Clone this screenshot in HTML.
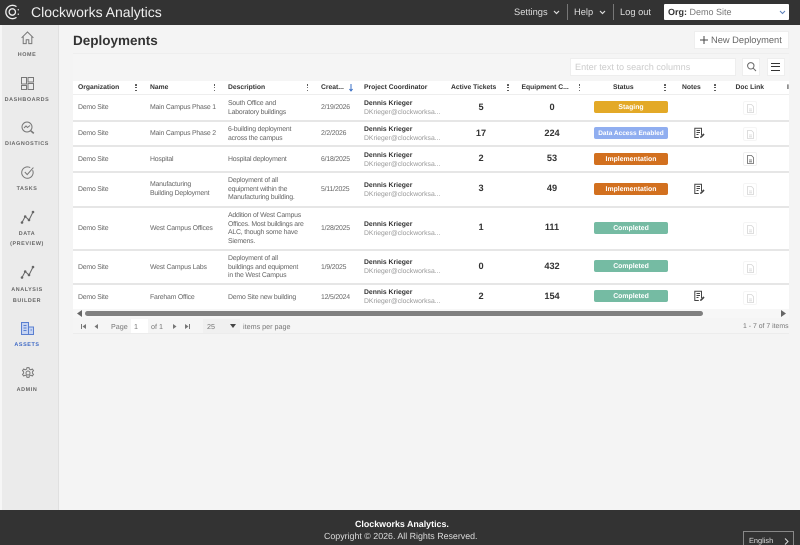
<!DOCTYPE html>
<html lang="en"><head><meta charset="utf-8"><title>Deployments</title>
<style>
html,body{margin:0;padding:0;width:800px;height:545px;overflow:hidden;background:#f4f4f4}
body{font-family:"Liberation Sans",sans-serif;color:#444;position:relative;text-rendering:geometricPrecision;filter:blur(.3px)}
.a{position:absolute}
.t{position:absolute;white-space:nowrap}
.h{position:absolute;top:84px;font-size:6.75px;font-weight:bold;color:#333;line-height:8px;white-space:nowrap}
.c{position:absolute;font-size:6.9px;color:#666;line-height:8.6px;white-space:nowrap;letter-spacing:-.2px;margin-top:1px}
.n{position:absolute;font-size:9.2px;font-weight:bold;color:#333;width:60px;text-align:center;line-height:10px}
.dk{position:absolute;left:364px;font-size:6.8px;font-weight:bold;color:#333;line-height:8px;white-space:nowrap;margin-top:1px}
.em{position:absolute;left:364px;font-size:6.8px;color:#999;line-height:8px;white-space:nowrap;margin-top:1px}
.b{position:absolute;left:594px;width:74px;height:12px;border-radius:2px;color:#fff;font-size:6.9px;font-weight:bold;text-align:center;line-height:13.5px;white-space:nowrap}
.r{position:absolute;left:73px;width:716px;height:2px;background:#e6e6e6}
.d{position:absolute;width:2px}
.d i{display:block;width:1.6px;height:1.6px;background:#444;border-radius:50%;margin-bottom:1.2px}
.s{position:absolute;left:0;width:54px;text-align:center;font-size:5.4px;font-weight:bold;letter-spacing:.6px;color:#666;line-height:11px;white-space:nowrap;margin-top:1px}
.doc{position:absolute;left:743px;width:12px;height:12px;background:#fff;border:1px solid #f0f0f0;border-radius:2px;margin-top:1px}
.doc svg{position:absolute;left:2.500px;top:1.500px}
svg{position:absolute;overflow:visible}
.p{position:absolute;font-size:7.2px;color:#777;line-height:9px;white-space:nowrap;top:322px}
</style></head><body>

<!-- top bar -->
<div class="a" style="left:0;top:0;width:800px;height:25px;background:#333"></div>
<svg style="left:5px;top:4px" width="15" height="16" viewBox="0 0 15 16" fill="none" stroke="#eee" stroke-width="1.3"><path d="M11.500 2.600A6.700 6.700 0 1 0 11.500 13.400"/><circle cx="7.300" cy="8" r="3.200"/><circle cx="13.300" cy="5.800" r=".7" fill="#eee" stroke="none"/><circle cx="13.300" cy="10.200" r=".7" fill="#eee" stroke="none"/></svg>
<div class="t" style="left:31px;top:3px;font-size:14px;color:#eee;line-height:18px">Clockworks Analytics</div>
<div class="t" style="left:514px;top:6px;font-size:9.3px;color:#ddd;line-height:12px">Settings</div>
<svg style="left:553px;top:10px" width="7" height="5" fill="none" stroke="#ddd" stroke-width="1.2"><path d="M1 1l2.500 2.500L6 1"/></svg>
<div class="a" style="left:567px;top:4px;width:1px;height:16px;background:#777"></div>
<div class="t" style="left:574px;top:6px;font-size:9.3px;color:#ddd;line-height:12px">Help</div>
<svg style="left:599px;top:10px" width="7" height="5" fill="none" stroke="#ddd" stroke-width="1.2"><path d="M1 1l2.500 2.500L6 1"/></svg>
<div class="a" style="left:613px;top:4px;width:1px;height:16px;background:#777"></div>
<div class="t" style="left:620px;top:6px;font-size:9.3px;color:#ddd;line-height:12px">Log out</div>
<div class="a" style="left:664px;top:4px;width:125px;height:16px;background:#fff;border-radius:1px"></div>
<div class="t" style="left:668px;top:6px;font-size:9px;color:#777;line-height:12px"><b style="color:#333">Org:</b> Demo Site</div>
<svg style="left:779px;top:10px" width="7" height="5" fill="none" stroke="#5b7fb8" stroke-width="1"><path d="M1 1l2.500 2.500L6 1"/></svg>

<!-- sidebar -->
<div class="a" style="left:0;top:25px;width:58px;height:485px;background:#ebebeb;border-right:1px solid #e0e0e0"></div>
<div class="a" style="left:0;top:25px;width:2px;height:485px;background:#f6f6f6"></div>
<svg style="left:21px;top:31px" width="13" height="14" fill="none" stroke="#777" stroke-width="1"><path d="M.6 6.800L6.500 1l5.900 5.800M2.200 5.600v7h3V8.800h2.600v3.800h3v-7"/></svg>
<div class="s" style="top:49px">HOME</div>
<svg style="left:21px;top:77px" width="13" height="13" fill="none" stroke="#777" stroke-width="1"><rect x=".5" y=".5" width="5" height="6.500"/><rect x="7" y=".5" width="5.500" height="4.500"/><rect x=".5" y="8.500" width="5" height="4"/><rect x="7" y="6.500" width="5.500" height="6"/></svg>
<div class="s" style="top:94px">DASHBOARDS</div>
<svg style="left:21px;top:121px" width="14" height="14" fill="none" stroke="#777" stroke-width="1"><circle cx="6" cy="6" r="5"/><path d="M9.800 9.800l3 2.600" stroke-width="1.600"/><path d="M3 7l2-2 1.500 1.500L9 4.500"/></svg>
<div class="s" style="top:138px">DIAGNOSTICS</div>
<svg style="left:21px;top:166px" width="13" height="13" fill="none" stroke="#777" stroke-width="1"><path d="M11.600 4.200A5.700 5.700 0 1 1 9.200 1.600"/><path d="M3.800 6l2.400 2.600L12.400 1.600"/></svg>
<div class="s" style="top:183px">TASKS</div>
<svg style="left:21px;top:211px" width="13" height="13" fill="none" stroke="#666" stroke-width="1"><path d="M1 11.500L4.200 5.500 8 9 12 1"/><circle cx="1" cy="11.500" r=".8" fill="#666"/><circle cx="4.200" cy="5.500" r=".8" fill="#666"/><circle cx="8" cy="9" r=".8" fill="#666"/><circle cx="12" cy="1" r=".8" fill="#666"/></svg>
<div class="s" style="top:228px">DATA</div>
<div class="s" style="top:238px">(PREVIEW)</div>
<svg style="left:21px;top:266px" width="13" height="13" fill="none" stroke="#666" stroke-width="1"><path d="M1 11.500L4.200 5.500 8 9 12 1"/><circle cx="1" cy="11.500" r=".8" fill="#666"/><circle cx="4.200" cy="5.500" r=".8" fill="#666"/><circle cx="8" cy="9" r=".8" fill="#666"/><circle cx="12" cy="1" r=".8" fill="#666"/></svg>
<div class="s" style="top:284px">ANALYSIS</div>
<div class="s" style="top:295px">BUILDER</div>
<svg style="left:21px;top:322px" width="13" height="13" fill="#c6d4f2" stroke="#5a7fd0" stroke-width="1"><rect x=".5" y=".5" width="7" height="12"/><rect x="7.500" y="5" width="5" height="7.500"/><path d="M2.500 3.500h3M2.500 6h3M2.500 8.500h3M9.500 8H11" fill="none"/></svg>
<div class="s" style="top:339px;color:#3a66c4">ASSETS</div>
<svg style="left:22px;top:367px" width="12" height="12" fill="none" stroke="#777" stroke-width="1"><circle cx="6" cy="6" r="2"/><path d="M5 .6h2l.4 1.600 1.400.6 1.500-.8 1.200 1.600-1.100 1.200v1.400l1.100 1.200-1.200 1.600-1.500-.8-1.400.6-.4 1.600H5l-.4-1.600-1.400-.6-1.500.8L.5 7.400l1.100-1.200V4.800L.5 3.600l1.200-1.600 1.500.8 1.400-.6z"/></svg>
<div class="s" style="top:384px">ADMIN</div>

<!-- heading -->
<div class="t" style="left:73px;top:32px;font-size:13.5px;font-weight:bold;color:#333;line-height:17px">Deployments</div>
<div class="a" style="left:694px;top:31px;width:95px;height:18px;background:#fff;border:1px solid #eee;box-sizing:border-box"></div>
<svg style="left:700px;top:36px" width="8" height="8" stroke="#444" stroke-width="1"><path d="M4 0v8M0 4h8"/></svg>
<div class="t" style="left:711px;top:34px;font-size:9.3px;color:#666;line-height:12px">New Deployment</div>

<!-- toolbar -->
<div class="a" style="left:73px;top:53px;width:716px;height:28px;background:#f5f5f5;border-top:1px solid #eee;box-sizing:border-box"></div>
<div class="a" style="left:570px;top:58px;width:166px;height:18px;background:#fff;border:1px solid #eee;box-sizing:border-box"></div>
<div class="t" style="left:575px;top:62px;font-size:9.1px;color:#ccc;line-height:10px">Enter text to search columns</div>
<div class="a" style="left:742px;top:58px;width:18px;height:18px;background:#fff;border:1px solid #eee;box-sizing:border-box"></div>
<svg style="left:747px;top:62px" width="9" height="9" fill="none" stroke="#666" stroke-width="1"><circle cx="3.800" cy="3.800" r="3.200"/><path d="M6.200 6.200L9 9"/></svg>
<div class="a" style="left:767px;top:58px;width:18px;height:18px;background:#fff;border:1px solid #eee;box-sizing:border-box"></div>
<div class="a" style="left:771px;top:63px;width:9px;height:8px;border-top:1px solid #333;border-bottom:1px solid #333;box-sizing:border-box"></div>
<div class="a" style="left:771px;top:66px;width:9px;height:1.200px;background:#333"></div>

<!-- table -->
<div class="a" style="left:73px;top:81px;width:716px;height:253px;background:#fff"></div>
<div class="a" style="left:73px;top:94px;width:716px;height:1px;background:#eee"></div>

<div class="h" style="left:78px">Organization</div>
<div class="h" style="left:150px">Name</div>
<div class="h" style="left:228px">Description</div>
<div class="h" style="left:321px">Creat...</div>
<div class="h" style="left:364px">Project Coordinator</div>
<div class="h" style="left:451px">Active Tickets</div>
<div class="h" style="left:521.500px">Equipment C...</div>
<div class="h" style="left:613px">Status</div>
<div class="h" style="left:682px">Notes</div>
<div class="h" style="left:735.500px">Doc Link</div>
<div class="h" style="left:787px">I</div>
<svg style="left:349px;top:84px" width="4" height="8" stroke="#3a6fc4" stroke-width="1" fill="none"><path d="M2 0v7M.4 5L2 7l1.600-2"/></svg>

<div class="d" style="left:135px;top:84px"><i></i><i></i><i></i></div>
<div class="d" style="left:213.500px;top:84px"><i></i><i></i><i></i></div>
<div class="d" style="left:306.500px;top:84px"><i></i><i></i><i></i></div>
<div class="d" style="left:507px;top:84px"><i></i><i></i><i></i></div>
<div class="d" style="left:578.500px;top:84px"><i></i><i></i><i></i></div>
<div class="d" style="left:664px;top:84px"><i></i><i></i><i></i></div>
<div class="d" style="left:714px;top:84px"><i></i><i></i><i></i></div>

<div class="r" style="top:120px"></div>
<div class="r" style="top:145px"></div>
<div class="r" style="top:171px"></div>
<div class="r" style="top:206px"></div>
<div class="r" style="top:249px"></div>
<div class="r" style="top:283px"></div>

<!-- row 1 -->
<div class="c" style="left:78px;top:103px">Demo Site</div>
<div class="c" style="left:150px;top:103px">Main Campus Phase 1</div>
<div class="c" style="left:228px;top:99px">South Office and<br>Laboratory buildings</div>
<div class="c" style="left:321px;top:103px">2/19/2026</div>
<div class="dk" style="top:99px">Dennis Krieger</div><div class="em" style="top:108px">DKrieger@clockworksa...</div>
<div class="n" style="left:451px;top:102px">5</div><div class="n" style="left:522px;top:102px">0</div>
<div class="b" style="top:101px;background:#e3a927">Staging</div>
<div class="doc" style="top:100px;opacity:.6"><svg width="7" height="9" fill="none" stroke="#bbb" stroke-width=".8"><path d="M.5.5h4l2 2v6h-6z"/><path d="M2 5h3M2 6.800h3"/></svg></div>

<!-- row 2 -->
<div class="c" style="left:78px;top:129px">Demo Site</div>
<div class="c" style="left:150px;top:129px">Main Campus Phase 2</div>
<div class="c" style="left:228px;top:125px">6-building deployment<br>across the campus</div>
<div class="c" style="left:321px;top:129px">2/2/2026</div>
<div class="dk" style="top:125px">Dennis Krieger</div><div class="em" style="top:134px">DKrieger@clockworksa...</div>
<div class="n" style="left:451px;top:128px">17</div><div class="n" style="left:522px;top:128px">224</div>
<div class="b" style="top:127px;background:#90aef0;font-size:6.5px">Data Access Enabled</div>
<svg style="left:694px;top:127px" width="11" height="12" fill="none" stroke="#444" stroke-width="1"><path d="M7.500 8V1.200H.8v9.300h4"/><path d="M2.500 3.500H6M2.500 5.500H6M2.500 7.500h2"/><path d="M6 11l.4-1.600 3-3 1.200 1.200-3 3z" fill="#444" stroke="none"/></svg>
<div class="doc" style="top:126px;opacity:.6"><svg width="7" height="9" fill="none" stroke="#bbb" stroke-width=".8"><path d="M.5.5h4l2 2v6h-6z"/><path d="M2 5h3M2 6.800h3"/></svg></div>

<!-- row 3 -->
<div class="c" style="left:78px;top:155px">Demo Site</div>
<div class="c" style="left:150px;top:155px">Hospital</div>
<div class="c" style="left:228px;top:155px">Hospital deployment</div>
<div class="c" style="left:321px;top:155px">6/18/2025</div>
<div class="dk" style="top:151px">Dennis Krieger</div><div class="em" style="top:160px">DKrieger@clockworksa...</div>
<div class="n" style="left:451px;top:153px">2</div><div class="n" style="left:522px;top:153px">53</div>
<div class="b" style="top:153px;background:#d2701f">Implementation</div>
<div class="doc" style="top:151px"><svg width="7" height="9" fill="none" stroke="#666" stroke-width=".8"><path d="M.5.5h4l2 2v6h-6z"/><path d="M2 5h3M2 6.800h3"/></svg></div>

<!-- row 4 -->
<div class="c" style="left:78px;top:185px">Demo Site</div>
<div class="c" style="left:150px;top:180px">Manufacturing<br>Building Deployment</div>
<div class="c" style="left:228px;top:176px">Deployment of all<br>equipment within the<br>Manufacturing building.</div>
<div class="c" style="left:321px;top:185px">5/11/2025</div>
<div class="dk" style="top:181px">Dennis Krieger</div><div class="em" style="top:190px">DKrieger@clockworksa...</div>
<div class="n" style="left:451px;top:183px">3</div><div class="n" style="left:522px;top:183px">49</div>
<div class="b" style="top:183px;background:#d2701f">Implementation</div>
<svg style="left:694px;top:183px" width="11" height="12" fill="none" stroke="#444" stroke-width="1"><path d="M7.500 8V1.200H.8v9.300h4"/><path d="M2.500 3.500H6M2.500 5.500H6M2.500 7.500h2"/><path d="M6 11l.4-1.600 3-3 1.200 1.200-3 3z" fill="#444" stroke="none"/></svg>
<div class="doc" style="top:182px;opacity:.6"><svg width="7" height="9" fill="none" stroke="#bbb" stroke-width=".8"><path d="M.5.5h4l2 2v6h-6z"/><path d="M2 5h3M2 6.800h3"/></svg></div>

<!-- row 5 -->
<div class="c" style="left:78px;top:224px">Demo Site</div>
<div class="c" style="left:150px;top:224px">West Campus Offices</div>
<div class="c" style="left:228px;top:211px">Addition of West Campus<br>Offices. Most buildings are<br>ALC, though some have<br>Siemens.</div>
<div class="c" style="left:321px;top:224px">1/28/2025</div>
<div class="dk" style="top:220px">Dennis Krieger</div><div class="em" style="top:229px">DKrieger@clockworksa...</div>
<div class="n" style="left:451px;top:222px">1</div><div class="n" style="left:522px;top:222px">111</div>
<div class="b" style="top:222px;background:#75bba3">Completed</div>
<div class="doc" style="top:221px;opacity:.6"><svg width="7" height="9" fill="none" stroke="#bbb" stroke-width=".8"><path d="M.5.5h4l2 2v6h-6z"/><path d="M2 5h3M2 6.800h3"/></svg></div>

<!-- row 6 -->
<div class="c" style="left:78px;top:263px">Demo Site</div>
<div class="c" style="left:150px;top:263px">West Campus Labs</div>
<div class="c" style="left:228px;top:254px">Deployment of all<br>buildings and equipment<br>in the West Campus</div>
<div class="c" style="left:321px;top:263px">1/9/2025</div>
<div class="dk" style="top:258px">Dennis Krieger</div><div class="em" style="top:267px">DKrieger@clockworksa...</div>
<div class="n" style="left:451px;top:261px">0</div><div class="n" style="left:522px;top:261px">432</div>
<div class="b" style="top:260px;background:#75bba3">Completed</div>
<div class="doc" style="top:260px;opacity:.6"><svg width="7" height="9" fill="none" stroke="#bbb" stroke-width=".8"><path d="M.5.5h4l2 2v6h-6z"/><path d="M2 5h3M2 6.800h3"/></svg></div>

<!-- row 7 -->
<div class="c" style="left:78px;top:293px">Demo Site</div>
<div class="c" style="left:150px;top:293px">Fareham Office</div>
<div class="c" style="left:228px;top:293px">Demo Site new building</div>
<div class="c" style="left:321px;top:293px">12/5/2024</div>
<div class="dk" style="top:288px">Dennis Krieger</div><div class="em" style="top:297px">DKrieger@clockworksa...</div>
<div class="n" style="left:451px;top:291px">2</div><div class="n" style="left:522px;top:291px">154</div>
<div class="b" style="top:290px;background:#75bba3">Completed</div>
<svg style="left:694px;top:290px" width="11" height="12" fill="none" stroke="#444" stroke-width="1"><path d="M7.500 8V1.200H.8v9.300h4"/><path d="M2.500 3.500H6M2.500 5.500H6M2.500 7.500h2"/><path d="M6 11l.4-1.600 3-3 1.200 1.200-3 3z" fill="#444" stroke="none"/></svg>
<div class="doc" style="top:290px;opacity:.6"><svg width="7" height="9" fill="none" stroke="#bbb" stroke-width=".8"><path d="M.5.5h4l2 2v6h-6z"/><path d="M2 5h3M2 6.800h3"/></svg></div>

<!-- scrollbar -->
<div class="a" style="left:73px;top:309px;width:716px;height:9px;background:#f7f7f7"></div>
<div class="a" style="left:85px;top:311px;width:618px;height:5px;background:#808080;border-radius:3px"></div>
<svg style="left:77px;top:310px" width="5" height="7" fill="#666"><path d="M5 0v7L0 3.500z"/></svg>
<svg style="left:781px;top:310px" width="5" height="7" fill="#666"><path d="M0 0v7l5-3.500z"/></svg>

<!-- pager -->
<div class="a" style="left:73px;top:318px;width:716px;height:16px;background:#f5f5f5;border-bottom:1px solid #ececec;box-sizing:border-box"></div>
<svg style="left:81px;top:324px" width="46" height="5" fill="#777"><path d="M0 0h1v5H0zM5 0v5L1.500 2.500zM17 0v5L13.500 2.500z"/></svg>
<div class="p" style="left:111px">Page</div>
<div class="a" style="left:131px;top:319px;width:17px;height:14px;background:#fff"></div>
<div class="p" style="left:134px">1</div>
<div class="p" style="left:151px">of 1</div>
<svg style="left:173px;top:324px" width="20" height="5" fill="#777"><path d="M0 0v5l3.500-2.500zM12 0v5l3.500-2.500zM16 0h1v5h-1z"/></svg>
<div class="a" style="left:203px;top:319px;width:37px;height:14px;background:#f0f0f0"></div>
<div class="p" style="left:207px">25</div>
<svg style="left:230px;top:324px" width="6" height="4" fill="#444"><path d="M0 0h6L3 4z"/></svg>
<div class="p" style="left:243px">items per page</div>
<div class="p" style="left:743px;font-size:6.900px">1 - 7 of 7 items</div>

<!-- footer -->
<div class="a" style="left:0;top:510px;width:800px;height:35px;background:#333"></div>
<div class="t" style="left:355px;top:518px;font-size:8.9px;font-weight:bold;color:#fff;line-height:12px">Clockworks Analytics.</div>
<div class="t" style="left:324px;top:530px;font-size:8.85px;color:#ddd;line-height:13px">Copyright © 2026. All Rights Reserved.</div>
<div class="a" style="left:743px;top:531px;width:51px;height:20px;border:1px solid #888;box-sizing:border-box"></div>
<div class="t" style="left:749px;top:535px;font-size:7.4px;color:#ddd;line-height:11px">English</div>
<svg style="left:784px;top:538px" width="5" height="7" fill="none" stroke="#ddd" stroke-width="1"><path d="M1 .5l3 3-3 3"/></svg>

</body></html>
